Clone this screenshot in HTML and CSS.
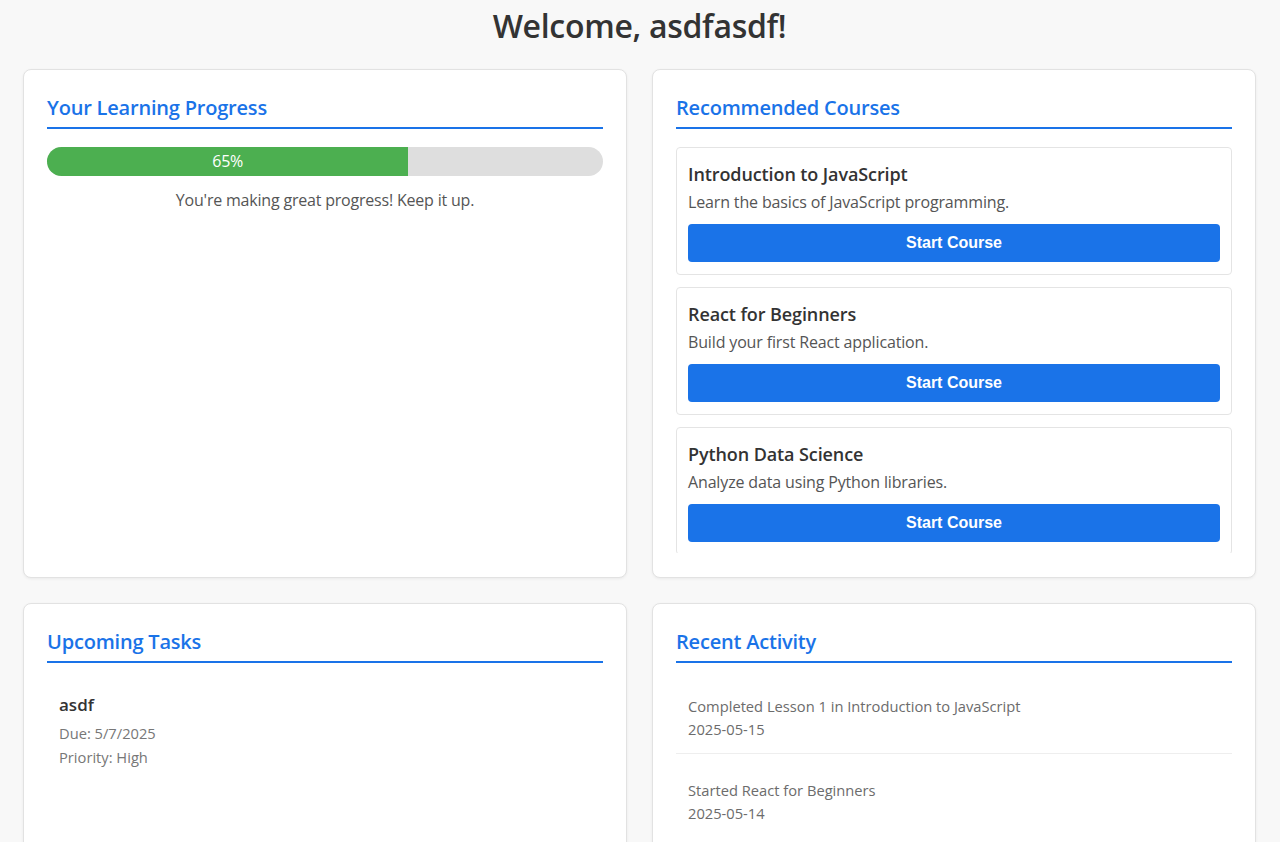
FILE: index.html
```html
<!DOCTYPE html>
<html lang="en">
<head>
<meta charset="utf-8">
<title>Dashboard</title>
<link rel="stylesheet" href="styles.css">
</head>
<body>
<div class="page">
  <h1 class="welcome">Welcome, asdfasdf!</h1>
  <div class="grid">
    <section class="card">
      <h2 class="card-title">Your Learning Progress</h2>
      <div class="progress">
        <div class="progress-fill" style="width:65%">65%</div>
      </div>
      <p class="progress-note">You're making great progress! Keep it up.</p>
    </section>

    <section class="card">
      <h2 class="card-title">Recommended Courses</h2>
      <div class="course-list">
        <div class="course">
          <h3 class="course-title">Introduction to JavaScript</h3>
          <p class="course-desc">Learn the basics of JavaScript programming.</p>
          <button class="btn">Start Course</button>
        </div>
        <div class="course">
          <h3 class="course-title">React for Beginners</h3>
          <p class="course-desc">Build your first React application.</p>
          <button class="btn">Start Course</button>
        </div>
        <div class="course">
          <h3 class="course-title">Python Data Science</h3>
          <p class="course-desc">Analyze data using Python libraries.</p>
          <button class="btn">Start Course</button>
        </div>
      </div>
    </section>

    <section class="card">
      <h2 class="card-title">Upcoming Tasks</h2>
      <div class="task">
        <h3 class="task-title">asdf</h3>
        <p class="task-meta">Due: 5/7/2025</p>
        <p class="task-meta">Priority: High</p>
      </div>
    </section>

    <section class="card">
      <h2 class="card-title">Recent Activity</h2>
      <ul class="activity">
        <li class="activity-item">
          <p class="activity-text">Completed Lesson 1 in Introduction to JavaScript</p>
          <p class="activity-date">2025-05-15</p>
        </li>
        <li class="activity-item">
          <p class="activity-text">Started React for Beginners</p>
          <p class="activity-date">2025-05-14</p>
        </li>
      </ul>
    </section>
  </div>
</div>
</body>
</html>
```

FILE: styles.css
```css
* { box-sizing: border-box; }

html, body {
  margin: 0;
  padding: 0;
  background: #f8f8f8;
  font-family: "Open Sans", "Noto Sans", "Liberation Sans", sans-serif;
  color: #333;
}

.page {
  padding: 0 24px 0 23px;
}

.welcome {
  margin: 0;
  padding-top: 3px;
  height: 69px;
  text-align: center;
  font-size: 32px;
  font-weight: 600;
  line-height: 46px;
  color: #333;
  letter-spacing: -0.3px;
}

.grid {
  display: grid;
  grid-template-columns: 1fr 1fr;
  column-gap: 25px;
  row-gap: 25px;
}

.card {
  background: #fff;
  border: 1px solid #e2e2e2;
  border-radius: 8px;
  box-shadow: 0 1px 3px rgba(0,0,0,0.06);
  padding: 23px 23px 24px 23px;
  height: 509px;
  display: flex;
  flex-direction: column;
  overflow: hidden;
}

.card-title {
  margin: 0 0 18px 0;
  padding-bottom: 5px;
  border-bottom: 2px solid #1a73e8;
  font-size: 20px;
  font-weight: 600;
  line-height: 29px;
  color: #1a73e8;
  letter-spacing: -0.2px;
}

.progress {
  height: 29px;
  border-radius: 15px;
  background: #dedede;
  overflow: hidden;
}

.progress-fill {
  height: 100%;
  background: #4caf50;
  color: #fff;
  text-align: center;
  font-size: 16px;
  line-height: 29px;
  letter-spacing: -0.2px;
}

.progress-note {
  margin: 13px 0 0;
  text-align: center;
  font-size: 16px;
  line-height: 22px;
  color: #555;
  letter-spacing: -0.2px;
}

.course-list {
  flex: 1;
  min-height: 0;
  overflow: hidden;
  display: flex;
  flex-direction: column;
  gap: 12px;
}

.course {
  flex: none;
  border: 1px solid #e4e4e4;
  border-radius: 4px;
  padding: 12px 11px 12px 11px;
}

.course-title {
  margin: 0;
  font-size: 18px;
  font-weight: 600;
  line-height: 28px;
  color: #333;
  letter-spacing: -0.1px;
}

.course-desc {
  margin: 0 0 8px;
  font-size: 16px;
  line-height: 28px;
  color: #555;
  letter-spacing: -0.15px;
}

.btn {
  display: block;
  width: 100%;
  height: 38px;
  border: none;
  border-radius: 4px;
  background: #1a73e8;
  color: #fff;
  font-family: "Liberation Sans", Arial, sans-serif;
  font-size: 16px;
  font-weight: 700;
  cursor: pointer;
}

.task {
  padding: 12px;
}

.task-title {
  margin: 0 0 4px;
  font-size: 17px;
  font-weight: 600;
  line-height: 24px;
  color: #333;
}

.task-meta {
  margin: 0;
  font-size: 14.7px;
  line-height: 24px;
  color: #777;
}

.activity {
  list-style: none;
  margin: 0;
  padding: 0;
}

.activity-item {
  padding: 14px 12px 12px;
  margin-bottom: 11px;
  border-bottom: 1px solid #eee;
}

.activity-item:last-child {
  border-bottom: none;
}

.activity-text,
.activity-date {
  margin: 0;
  font-size: 14.7px;
  line-height: 23px;
  color: #6c6c6c;
}
```
